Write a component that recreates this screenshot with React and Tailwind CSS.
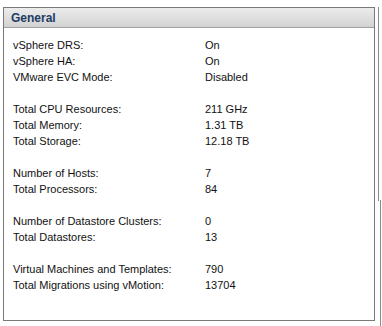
import React from "react";

const groups = [
  [
    ["vSphere DRS:", "On"],
    ["vSphere HA:", "On"],
    ["VMware EVC Mode:", "Disabled"],
  ],
  [
    ["Total CPU Resources:", "211 GHz"],
    ["Total Memory:", "1.31 TB"],
    ["Total Storage:", "12.18 TB"],
  ],
  [
    ["Number of Hosts:", "7"],
    ["Total Processors:", "84"],
  ],
  [
    ["Number of Datastore Clusters:", "0"],
    ["Total Datastores:", "13"],
  ],
  [
    ["Virtual Machines and Templates:", "790"],
    ["Total Migrations using vMotion:", "13704"],
  ],
];

export default function App() {
  return (
    <div
      className="relative w-[382px] h-[326px] bg-white overflow-hidden"
      style={{ fontFamily: '"Liberation Sans", Arial, sans-serif' }}
    >
      <div className="ml-[3px] mt-[7px] w-[372px] h-[314px] border border-[#7a7a7a] flex flex-col">
        <div className="h-[20px] border-b border-[#a0a0a0] bg-gradient-to-b from-[#ececec] to-[#d2d2d2] flex items-center pl-[7px]">
          <span className="text-[12px] font-bold text-[#1d3c64] leading-none">General</span>
        </div>
        <div className="pt-[9px] pl-[9px] flex flex-col gap-[16px] text-[11px] text-[#111] leading-[16px]">
          {groups.map((g, i) => (
            <div key={i} className="flex flex-col">
              {g.map(([k, v]) => (
                <div key={k} className="flex">
                  <span className="w-[192px]">{k}</span>
                  <span>{v}</span>
                </div>
              ))}
            </div>
          ))}
        </div>
      </div>
      <div className="absolute left-[378px] top-[7px] w-px h-[194px] bg-[#8a8a8a]" />
      <div className="absolute left-[380px] top-[200px] w-px h-[126px] bg-[#8a8a8a]" />
    </div>
  );
}
